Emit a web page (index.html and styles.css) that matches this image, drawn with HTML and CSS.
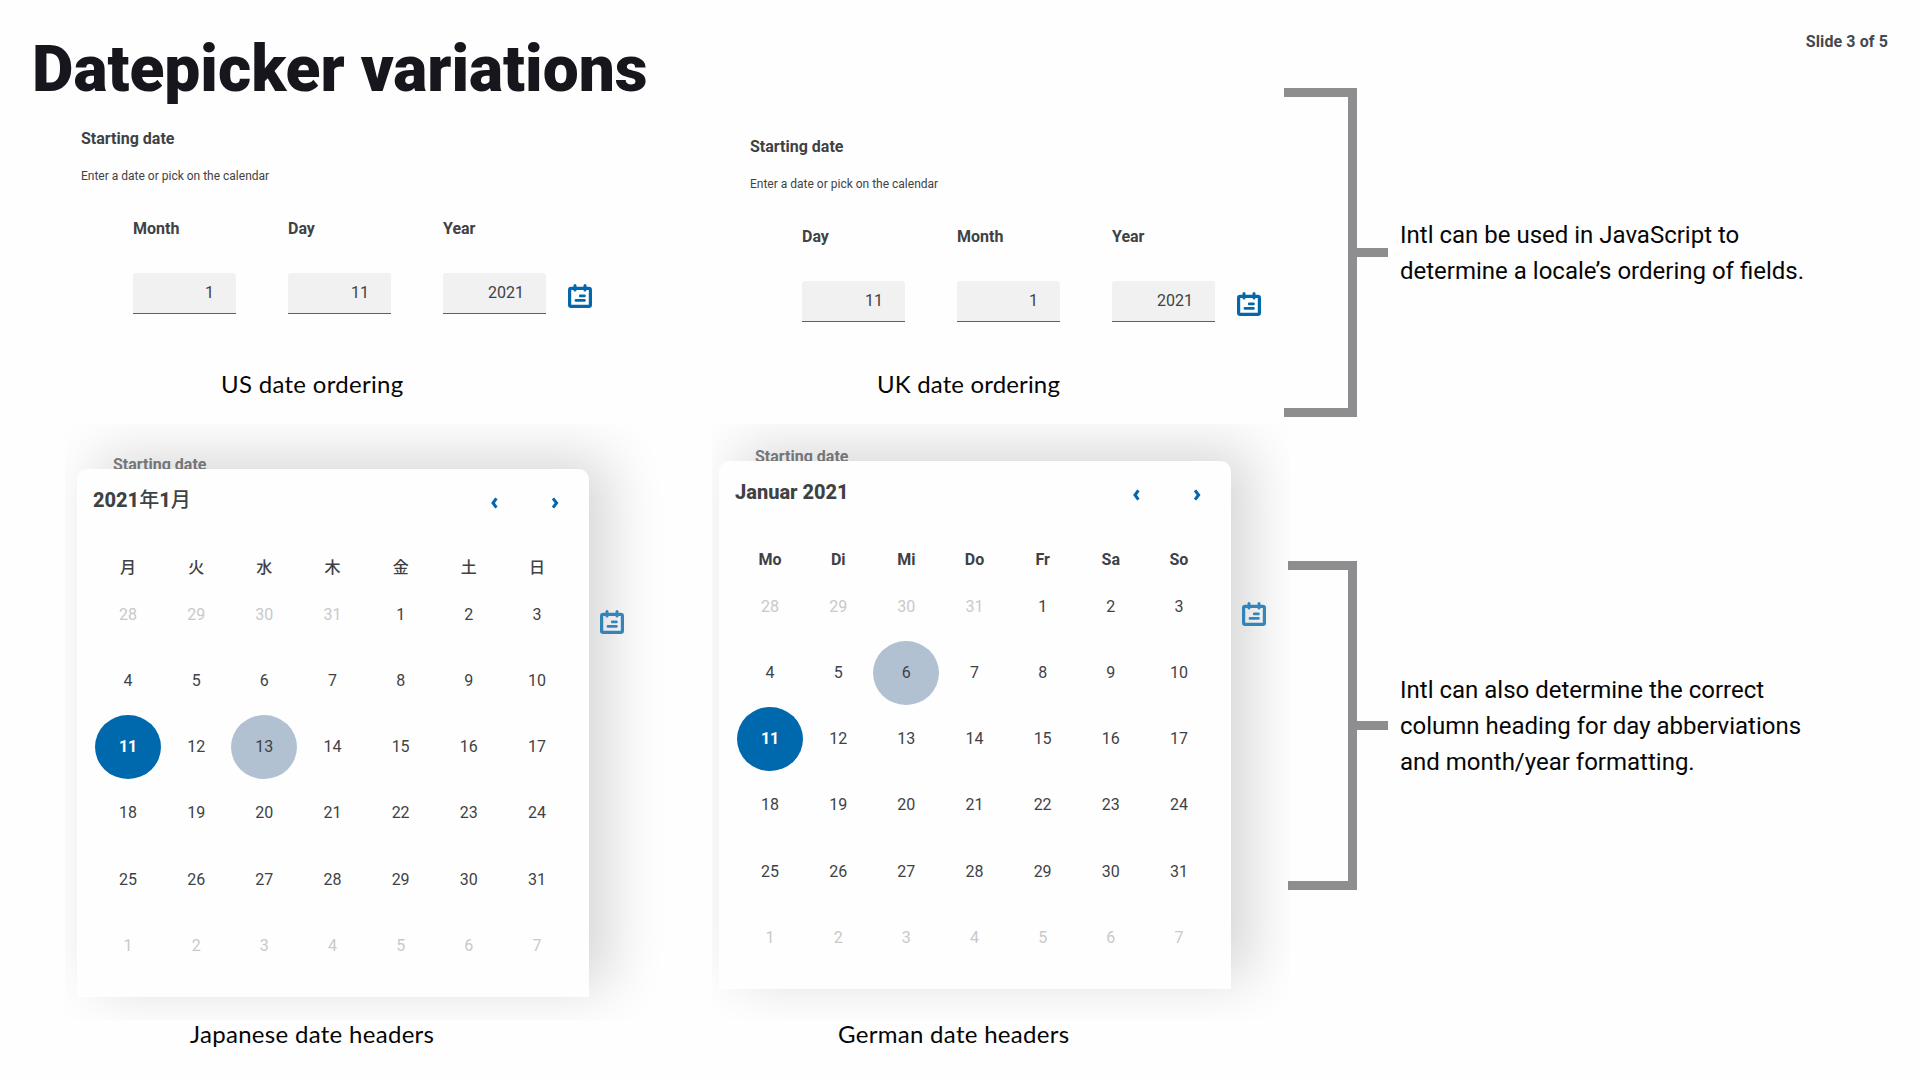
FILE: index.html
```html
<!DOCTYPE html>
<html lang="en">
<head>
<meta charset="utf-8">
<title>Datepicker variations</title>
<link rel="stylesheet" href="styles.css">
</head>
<body>
<svg class="sprite" width="0" height="0" aria-hidden="true">
  <symbol id="calendar" viewBox="0 0 24 24">
    <rect x="1.6" y="4.4" width="20.8" height="18" rx="1.6" fill="none" stroke="currentColor" stroke-width="3.2"/>
    <path d="M7 1.5V6M17 1.5V6" stroke="currentColor" stroke-width="3" stroke-linecap="round"/>
    <path d="M12.3 11.9H16.4M8 16.4H16.4" stroke="currentColor" stroke-width="2.8" stroke-linecap="round"/>
  </symbol>
  <symbol id="prev" viewBox="0 0 8 12"><path d="M6.4 1.4 3 6 6.4 10.6" fill="none" stroke="currentColor" stroke-width="3"/></symbol>
  <symbol id="next" viewBox="0 0 8 12"><path d="M2 1.4 5.6 6 2 10.6" fill="none" stroke="currentColor" stroke-width="3"/></symbol>
</svg>
<div class="slide">
  <main class="demos">
    <h1>Datepicker variations</h1>
    <div class="row row-fields">
      <figure class="demo">
        <div class="picker">
          <p class="legend">Starting date</p>
          <p class="hint">Enter a date or pick on the calendar</p>
          <div class="fields">
            <label class="field"><span>Month</span><b class="input">1</b></label>
            <label class="field"><span>Day</span><b class="input">11</b></label>
            <label class="field"><span>Year</span><b class="input">2021</b></label>
            <svg class="icon"><use href="#calendar"/></svg>
          </div>
        </div>
        <figcaption class="cap-us">US date ordering</figcaption>
      </figure>
      <figure class="demo">
        <div class="picker picker-uk">
          <p class="legend">Starting date</p>
          <p class="hint">Enter a date or pick on the calendar</p>
          <div class="fields">
            <label class="field"><span>Day</span><b class="input">11</b></label>
            <label class="field"><span>Month</span><b class="input">1</b></label>
            <label class="field"><span>Year</span><b class="input">2021</b></label>
            <svg class="icon"><use href="#calendar"/></svg>
          </div>
        </div>
        <figcaption class="cap-uk">UK date ordering</figcaption>
      </figure>
    </div>
    <div class="row row-calendars">
      <figure class="demo">
        <div class="stage stage-ja">
          <p class="legend behind">Starting date</p>
          <div class="popup">
            <section class="card" lang="ja">
              <header class="month"><h2>2021<i>年</i>1<i>月</i></h2><svg class="arrow"><use href="#prev"/></svg><svg class="arrow"><use href="#next"/></svg></header>
              <div class="heads"><span>月</span><span>火</span><span>水</span><span>木</span><span>金</span><span>土</span><span>日</span></div>
              <div class="days">
                <span class="out">28</span><span class="out">29</span><span class="out">30</span><span class="out">31</span><span>1</span><span>2</span><span>3</span>
                <span>4</span><span>5</span><span>6</span><span>7</span><span>8</span><span>9</span><span>10</span>
                <span class="selected">11</span><span>12</span><span class="today">13</span><span>14</span><span>15</span><span>16</span><span>17</span>
                <span>18</span><span>19</span><span>20</span><span>21</span><span>22</span><span>23</span><span>24</span>
                <span>25</span><span>26</span><span>27</span><span>28</span><span>29</span><span>30</span><span>31</span>
                <span class="out">1</span><span class="out">2</span><span class="out">3</span><span class="out">4</span><span class="out">5</span><span class="out">6</span><span class="out">7</span>
              </div>
            </section>
            <svg class="icon"><use href="#calendar"/></svg>
          </div>
        </div>
        <figcaption class="cap-ja">Japanese date headers</figcaption>
      </figure>
      <figure class="demo">
        <div class="stage stage-de">
          <p class="legend behind">Starting date</p>
          <div class="popup">
            <section class="card" lang="de">
              <header class="month"><h2>Januar 2021</h2><svg class="arrow"><use href="#prev"/></svg><svg class="arrow"><use href="#next"/></svg></header>
              <div class="heads"><span>Mo</span><span>Di</span><span>Mi</span><span>Do</span><span>Fr</span><span>Sa</span><span>So</span></div>
              <div class="days">
                <span class="out">28</span><span class="out">29</span><span class="out">30</span><span class="out">31</span><span>1</span><span>2</span><span>3</span>
                <span>4</span><span>5</span><span class="today">6</span><span>7</span><span>8</span><span>9</span><span>10</span>
                <span class="selected">11</span><span>12</span><span>13</span><span>14</span><span>15</span><span>16</span><span>17</span>
                <span>18</span><span>19</span><span>20</span><span>21</span><span>22</span><span>23</span><span>24</span>
                <span>25</span><span>26</span><span>27</span><span>28</span><span>29</span><span>30</span><span>31</span>
                <span class="out">1</span><span class="out">2</span><span class="out">3</span><span class="out">4</span><span class="out">5</span><span class="out">6</span><span class="out">7</span>
              </div>
            </section>
            <svg class="icon"><use href="#calendar"/></svg>
          </div>
        </div>
        <figcaption class="cap-de">German date headers</figcaption>
      </figure>
    </div>
  </main>
  <aside class="notes">
    <p class="counter">Slide 3 of 5</p>
    <div class="note">
      <div class="bracket"></div><div class="stub"></div>
      <p>Intl can be used in JavaScript to<br>determine a locale’s ordering of fields.</p>
    </div>
    <div class="note note-headers">
      <div class="bracket"></div><div class="stub"></div>
      <p>Intl can also determine the correct<br>column heading for day abberviations<br>and month/year formatting.</p>
    </div>
  </aside>
</div>
</body>
</html>
```
FILE: styles.css
```css
* { box-sizing: border-box; margin: 0; padding: 0; }
body { background: #fefefe; font-family: Roboto, "Noto Sans CJK JP", sans-serif; font-size: 16px; color: #3e4245; }
.sprite { display: block; }
.slide { display: flex; width: 1920px; height: 1080px; overflow: hidden; }

.demos { width: 1284px; }
h1 { height: 129px; padding: 33px 0 0 32px; font-size: 64px; line-height: 74px; font-weight: 900; color: #17161d; white-space: nowrap; }
.row { display: grid; grid-template-columns: 669px 615px; }
.row-fields { height: 295px; }

.picker { height: 234px; padding-left: 81px; }
.picker-uk { padding-top: 8px; }
.legend { font-weight: 700; line-height: 20px; }
.hint { font-size: 12px; line-height: 16px; margin-top: 19px; }
.fields { display: flex; gap: 52px; padding: 35px 0 0 52px; }
.field { display: block; width: 103px; font-weight: 700; }
.field span { display: block; line-height: 20px; }
.input { display: block; height: 41px; margin-top: 34px; padding-right: 22px; text-align: right; line-height: 40px; font-weight: 400; background: #f1f1f1; border-bottom: 1px solid #1a76a9; border-radius: 3px 3px 0 0; }
.icon { flex: none; width: 24px; height: 24px; color: #0268ab; }
.fields .icon { margin: 65px 0 0 -30px; }

figcaption { font-family: Lato, sans-serif; font-size: 24px; line-height: 30px; letter-spacing: .3px; color: #060606; white-space: nowrap; }
.cap-us { margin: 6px 0 0 221px; }
.cap-uk { margin: 6px 0 0 208px; letter-spacing: .15px; }
.cap-ja { margin: -1px 0 0 190px; }
.cap-de { margin: -1px 0 0 169px; }

.stage { height: 596px; overflow: hidden; padding-top: 31px; width: 600px; margin-left: 65px; padding-left: 12px; }
.stage-de { padding-top: 23px; width: 578px; margin-left: 43px; padding-left: 7px; }
.behind { height: 14px; padding-left: 36px; opacity: .66; }
.popup { display: flex; gap: 11px; }
.popup .icon { margin-top: 141px; opacity: .78; }
.card { position: relative; width: 512px; height: 528px; padding: 0 17px; background: #fefefe; border-radius: 10px 10px 0 0; box-shadow: 20px -11px 56px rgba(0, 0, 0, .16); }
.month { display: flex; align-items: center; height: 68px; gap: 53px; padding-right: 13px; }
h2 { flex: 1; font-size: 20px; font-weight: 800; line-height: 28px; margin: -6px 0 0 -1px; }
h2 i { font-style: normal; font-weight: 500; }
.arrow { width: 8px; height: 12px; color: #0268ab; }
.heads, .days { display: grid; grid-template-columns: repeat(7, 68.15px); }
.heads { height: 45px; padding-top: 19px; text-align: center; font-weight: 700; line-height: 24px; }
.heads:lang(ja) { font-weight: 500; }
.days { grid-auto-rows: 66.15px; align-items: center; justify-items: center; }
.days span { display: flex; align-items: center; justify-content: center; width: 66px; height: 64px; padding-bottom: 1px; border-radius: 50%; }
.days .out { color: #c9c9c9; }
.days .selected { background: #0069ad; color: #fff; font-weight: 700; }
.days .today { background: #b1c1d2; }

.notes { flex: 1; }
.counter { height: 88px; padding: 32px 32px 0 0; text-align: right; font-weight: 700; line-height: 20px; letter-spacing: .1px; color: #44484f; }
.note { display: flex; align-items: center; height: 329px; }
.note-headers { margin-top: 144px; padding-left: 4px; }
.bracket { width: 73px; height: 329px; border: 9px solid #8e8e90; border-left: 0; }
.note-headers .bracket { width: 69px; }
.stub { width: 31px; height: 9px; background: #8e8e90; }
.note p { margin-left: 12px; font-size: 24px; line-height: 36px; color: #060606; white-space: nowrap; }
```
